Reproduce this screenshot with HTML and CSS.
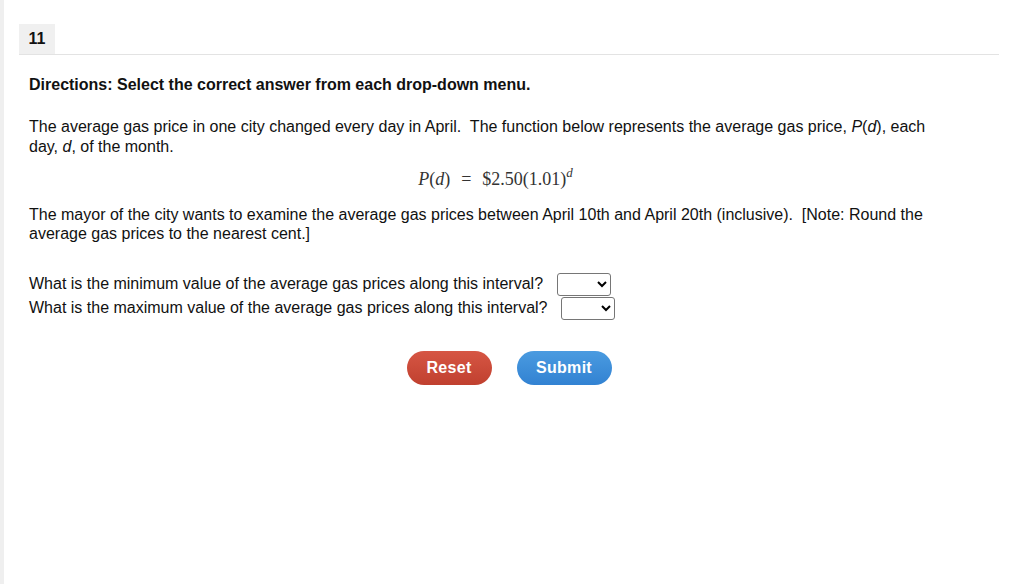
FILE: index.html
```html
<!DOCTYPE html>
<html>
<head>
<meta charset="utf-8">
<link rel="stylesheet" href="styles.css">
</head>
<body>
<div class="page">
  <div class="strip"></div>
  <div class="main">
    <div class="header"><span class="num">11</span></div>
    <div class="content">
      <p class="directions">Directions: Select the correct answer from each drop-down menu.</p>
      <p class="para">The average gas price in one city changed every day in April.&nbsp; The function below represents the average gas price, <i>P</i>(<i>d</i>), each day, <i>d</i>, of the month.</p>
      <div class="formula"><span class="mi">P</span>(<span class="mi">d</span>)<span class="eq">=</span>$2.50(1.01)<sup class="mi">d</sup></div>
      <p class="para para2">The mayor of the city wants to examine the average gas prices between April 10th and April 20th (inclusive).&nbsp; [Note: Round the average gas prices to the nearest cent.]</p>
      <div class="questions">
        <div class="q">What is the minimum value of the average gas prices along this interval?<select class="dd"><option></option></select></div>
        <div class="q">What is the maximum value of the average gas prices along this interval?<select class="dd"><option></option></select></div>
      </div>
      <div class="buttons">
        <button class="btn reset">Reset</button>
        <button class="btn submit">Submit</button>
      </div>
    </div>
  </div>
</div>
</body>
</html>
```
FILE: styles.css
```css
html, body { margin: 0; padding: 0; background: #fff; }
body { font-family: "Liberation Sans", Arial, sans-serif; font-size: 16px; color: #111; }
.page { display: flex; min-height: 584px; }
.strip { width: 4px; background: #efefef; flex: none; }
.main { margin-left: 15px; width: 980px; padding-top: 24px; }
.header { border-bottom: 1px solid #e3e3e3; height: 30px; display: flex; }
.num { background: #f0f0f0; width: 36px; line-height: 30px; font-weight: bold; text-align: center; font-size: 16px; }
.content { padding-left: 10px; width: 925px; }
.directions { margin: 20px 0 0; font-weight: bold; line-height: 20px; }
.para { margin: 22px 0 0; line-height: 20px; }
.para2 { margin-top: 13px; line-height: 19px; }
.formula { text-align: center; font-family: "Liberation Serif", "DejaVu Serif", serif; font-size: 18px; line-height: 26px; margin-top: 9px; padding-left: 8px; color: #333; }
.formula .mi { font-style: italic; }
.formula .eq { margin: 0 11px; }
.formula sup { font-size: 13px; vertical-align: 8px; line-height: 0; }
.questions { margin-top: 29px; }
.q { height: 24px; display: flex; align-items: center; }
.dd { margin-left: 14px; width: 54px; height: 23px; font-size: 13px; border: 1px solid #767676; border-radius: 3px; background: #fff; }
.buttons { display: flex; justify-content: center; gap: 25px; margin-top: 31px; width: 960px; }
.btn { height: 34px; border: none; border-radius: 17px; color: #fff; font-family: "Liberation Sans", Arial, sans-serif; font-weight: bold; font-size: 16px; letter-spacing: 0.3px; padding: 0; }
.reset { width: 85px; background: linear-gradient(#d65644, #c0402f); }
.submit { width: 95px; background: linear-gradient(#4a9be0, #3282d2); }
```
